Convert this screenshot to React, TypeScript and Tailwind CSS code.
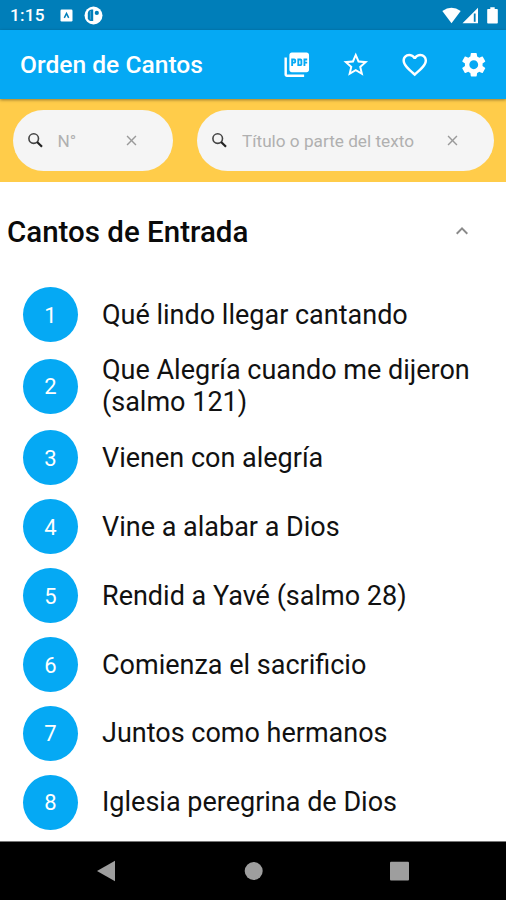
import { useState } from 'react'
import { MdPictureAsPdf, MdStarBorder, MdFavoriteBorder, MdSettings, MdClose, MdExpandLess } from 'react-icons/md'

type Song = {
  id: number
  title: string
}

const songs: Song[] = [
  { id: 1, title: 'Qué lindo llegar cantando' },
  { id: 2, title: 'Que Alegría cuando me dijeron (salmo 121)' },
  { id: 3, title: 'Vienen con alegría' },
  { id: 4, title: 'Vine a alabar a Dios' },
  { id: 5, title: 'Rendid a Yavé (salmo 28)' },
  { id: 6, title: 'Comienza el sacrificio' },
  { id: 7, title: 'Juntos como hermanos' },
  { id: 8, title: 'Iglesia peregrina de Dios' },
]

function StatusBar() {
  return (
    <div className="flex h-[30px] shrink-0 items-center bg-[#007eb9] pl-[10px] pr-[8px] pt-px text-white">
      <span className="w-[50px] text-[17.2px] font-medium leading-none tracking-[0.2px]">1:15</span>
      <svg className="h-[13px] w-[13px]" viewBox="0 0 13 13">
        <rect x="0.5" y="0.5" width="12" height="12" rx="1.2" fill="#fff" />
        <path d="M4.3 8.8L6.5 4.4L8.7 8.8" fill="none" stroke="#007eb9" strokeWidth="1.5" />
      </svg>
      <svg className="ml-[11px] h-[19px] w-[19px]" viewBox="0 0 19 19">
        <circle cx="9.5" cy="9.5" r="9" fill="#fff" />
        <path d="M9.2 3.6H7.5Q4 4.2 3.8 7.5V12.5Q4.5 14.8 6.5 15H9.2Z" fill="#007eb9" />
        <path d="M6.4 5V13.5" stroke="#4aa3cd" strokeWidth="1" />
        <circle cx="12.8" cy="6.9" r="2.1" fill="#007eb9" />
      </svg>
      <div className="flex-1" />
      <svg className="h-[17px] w-[19px]" viewBox="0 0 19 17">
        <path d="M0.3 4Q9.5 -2.6 18.7 4L9.5 16.3Z" fill="#fff" />
      </svg>
      <svg className="ml-[1px] h-[17px] w-[17px]" viewBox="0 0 17 17">
        <path d="M0.5 16.3L16 0.8V16.3Z" fill="#fff" />
        <path d="M12.7 6.5V14.8" stroke="#007eb9" strokeWidth="1.8" />
      </svg>
      <svg className="ml-[8px] h-[17px] w-[11px]" viewBox="0 0 11 17">
        <path d="M3.3 0.3H7.7V2H10Q10.8 2 10.8 2.8V15.8Q10.8 16.6 10 16.6H1Q0.2 16.6 0.2 15.8V2.8Q0.2 2 1 2H3.3Z" fill="#fff" />
      </svg>
    </div>
  )
}

function Header() {
  return (
    <header className="z-10 flex h-[69px] shrink-0 items-center bg-[#05a9f4] pl-5 pr-[17.5px] text-white shadow-[0_1px_3px_rgba(0,0,0,0.4)]">
      <h1 className="flex-1 pt-[2px] text-[24.6px] font-medium leading-none">Orden de Cantos</h1>
      <div className="flex items-center gap-[29.5px] text-[29.5px]">
        <MdPictureAsPdf />
        <MdStarBorder />
        <MdFavoriteBorder />
        <MdSettings />
      </div>
    </header>
  )
}

type SearchFieldProps = {
  placeholder: string
  className: string
  value: string
  onChange: (value: string) => void
}

function SearchField({ placeholder, className, value, onChange }: SearchFieldProps) {
  return (
    <label className={`flex h-[61.5px] items-center rounded-full bg-[#f5f5f5] pl-[13px] pr-[33px] ${className}`}>
      <svg className="mt-[2px] h-[18px] w-[18px] shrink-0" viewBox="0 0 18 18" fill="none">
        <circle cx="7.7" cy="6.6" r="4.8" stroke="#444" strokeWidth="1.6" />
        <path d="M11.1 10L16 14.8" stroke="#222" strokeWidth="2.2" />
      </svg>
      <input
        type="text"
        placeholder={placeholder}
        value={value}
        onChange={(e) => onChange(e.target.value)}
        className="ml-[14px] w-0 min-w-0 flex-1 pt-[3px] text-[17.2px] text-gray-800 outline-none placeholder:text-[#b0b0b0]"
      />
      <button type="button" onClick={() => onChange('')} className="mt-px shrink-0 text-[17px] text-[#9a9a9a]">
        <MdClose />
      </button>
    </label>
  )
}

export default function App() {
  const [number, setNumber] = useState<string>('')
  const [text, setText] = useState<string>('')

  return (
    <div className="flex h-[900px] w-[506px] flex-col overflow-hidden bg-white font-['Roboto',sans-serif]">
      <StatusBar />
      <Header />

      {/* Search */}
      <div className="flex h-[83px] shrink-0 gap-6 bg-[#ffcc4a] px-[12.5px] pt-[10.5px]">
        <SearchField placeholder="N°" value={number} onChange={setNumber} className="w-[160.5px] shrink-0" />
        <SearchField placeholder="Título o parte del texto" value={text} onChange={setText} className="min-w-0 flex-1" />
      </div>

      {/* Songs */}
      <main className="flex h-[659px] shrink-0 flex-col">
        <div className="flex h-[98.5px] items-center justify-between pl-[7px] pr-[32px]">
          <h2 className="pt-[2px] text-[29.5px] font-medium leading-none text-[#0a0a0a]">Cantos de Entrada</h2>
          <MdExpandLess className="text-[24px] text-[#8a8a8a]" />
        </div>
        <ul>
          {songs.map((song) => (
            <li key={song.id} className="flex min-h-[68.9px] items-center py-[5px] pl-[23px] pr-[20px]">
              <span className="flex h-[55px] w-[55px] shrink-0 items-center justify-center rounded-full bg-[#05a9f4] pt-px text-[22px] text-white">
                {song.id}
              </span>
              <span className="ml-[24px] text-[27px] leading-[32px] text-[#111]">{song.title}</span>
            </li>
          ))}
        </ul>
      </main>

      {/* Android navigation */}
      <nav className="flex flex-1 items-center border-t border-[#777] bg-black text-[#9e9e9e]">
        <svg className="h-[22px] w-full" viewBox="0 0 506 22" fill="currentColor">
          <path d="M97 11L115 0.7V21.3Z" />
          <circle cx="253.7" cy="11" r="9" />
          <rect x="390" y="1.7" width="19" height="18.7" rx="1" />
        </svg>
      </nav>
    </div>
  )
}
